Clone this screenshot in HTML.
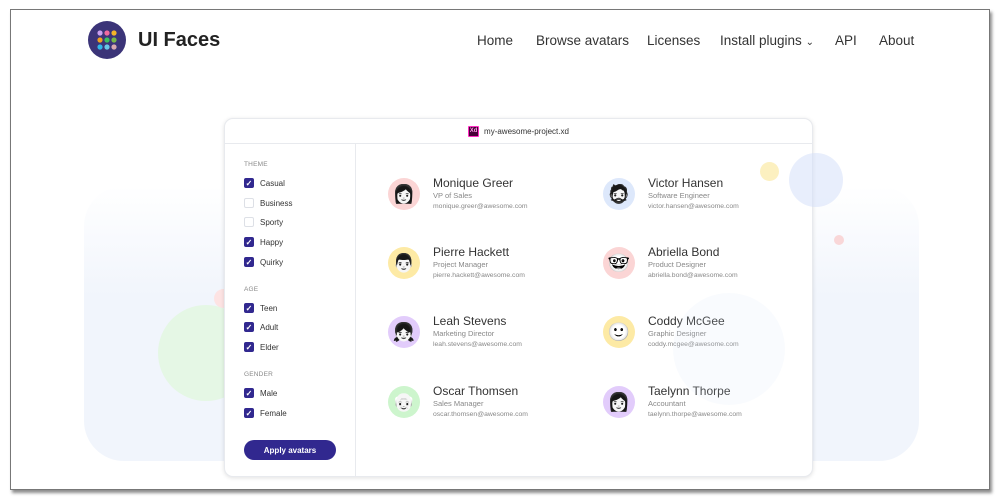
<!DOCTYPE html>
<html><head><meta charset="utf-8"><style>
*{margin:0;padding:0;box-sizing:border-box}
body{width:1000px;height:500px;background:#fff;position:relative;overflow:hidden;font-family:"Liberation Sans",sans-serif;color:#333}
.frame{position:absolute;left:10px;top:9px;width:980px;height:481px;border:1px solid #777;box-shadow:2px 3px 3px rgba(0,0,0,.45);background:#fff;overflow:hidden}
.abs{position:absolute}
.blob{left:73px;top:176px;width:835px;height:275px;border-radius:40px;background:linear-gradient(#fff,#f1f5fc 40%,#f1f5fc)}
.c{position:absolute;border-radius:50%}
.nav a{position:absolute;top:23px;font-size:13.5px;color:#333;text-decoration:none;white-space:nowrap}
.card{left:213px;top:108px;width:589px;height:359px;background:#fff;border-radius:9px;box-shadow:0 1px 4px rgba(0,0,0,.12);border:1px solid #e8eaee}
.hdr{height:25px;border-bottom:1px solid #e8eaee;font-size:8px;color:#333;display:flex;align-items:center;justify-content:center}
.xd{width:11px;height:11px;background:#470137;border:1px solid #ff2bc2;color:#ff9ae6;font-size:6px;font-weight:bold;display:inline-flex;align-items:center;justify-content:center;margin-right:5px;border-radius:1px}
.side{position:absolute;left:0;top:25px;width:131px;bottom:0;border-right:1px solid #e8eaee}
.lbl{position:absolute;left:19px;font-size:6.5px;color:#888;letter-spacing:.2px}
.cb{position:absolute;left:19px;font-size:8px;color:#333;display:flex;align-items:center}
.cb i{width:10px;height:10px;border-radius:2px;background:#31288f;margin-right:6px;display:inline-flex;align-items:center;justify-content:center;color:#fff;font-style:normal;font-size:8px;font-weight:bold}
.cb i.off{background:#fff;border:1px solid #dde0e6}
.btn{position:absolute;left:19px;top:296px;width:92px;height:20px;border-radius:10px;background:#31288f;color:#fff;font-size:8px;font-weight:bold;display:flex;align-items:center;justify-content:center}
.p{position:absolute}
.av{position:absolute;left:0;top:0;width:32px;height:32px;border-radius:50%;display:flex;align-items:center;justify-content:center;font-size:18px}
.av span{filter:grayscale(1) contrast(1.6)}
.p b{position:absolute;left:45px;top:-2px;font-weight:normal;font-size:12px;color:#333;white-space:nowrap}
.p s{position:absolute;left:45px;top:13px;text-decoration:none;font-size:7.5px;color:#888;white-space:nowrap}
.p u{position:absolute;left:45px;top:25px;text-decoration:none;font-size:6.8px;color:#888;white-space:nowrap}
</style></head><body>
<div class="frame">
<div class="abs blob"></div>
<div class="c" style="left:147px;top:295px;width:96px;height:96px;background:#e5f7e5"></div>
<div class="c" style="left:203px;top:279px;width:19px;height:19px;background:#fde3e3"></div>
<div class="c" style="left:236px;top:308px;width:52px;height:52px;background:#fdfbee"></div>
<div class="c" style="left:77px;top:11px;width:38px;height:38px;background:#3b3478"></div>
<svg class="abs" style="left:77px;top:11px" width="38" height="38">
<circle cx="12" cy="12" r="2.6" fill="#c9a0f0"/><circle cx="19" cy="12" r="2.6" fill="#f06aa0"/><circle cx="26" cy="12" r="2.6" fill="#f5b428"/>
<circle cx="12" cy="19" r="2.6" fill="#f0a020"/><circle cx="19" cy="19" r="2.6" fill="#3cc060"/><circle cx="26" cy="19" r="2.6" fill="#78b848"/>
<circle cx="12" cy="26" r="2.6" fill="#30b8e8"/><circle cx="19" cy="26" r="2.6" fill="#68c8e8"/><circle cx="26" cy="26" r="2.6" fill="#d8a8b0"/></svg>
<div class="abs" style="left:127px;top:19px;font-size:20px;font-weight:bold;color:#222">UI Faces</div>
<div class="nav">
<a style="left:466px">Home</a><a style="left:525px">Browse avatars</a><a style="left:636px">Licenses</a><a style="left:709px">Install plugins <span style="font-size:10px">&#8964;</span></a><a style="left:824px">API</a><a style="left:868px">About</a>
</div>
<div class="abs card">
<div class="hdr"><span class="xd">Xd</span>my-awesome-project.xd</div>
<div class="side">
<div class="lbl" style="top:17px">THEME</div>
<div class="cb" style="top:34px"><i>✓</i>Casual</div>
<div class="cb" style="top:54px"><i class="off"></i>Business</div>
<div class="cb" style="top:73px"><i class="off"></i>Sporty</div>
<div class="cb" style="top:93px"><i>✓</i>Happy</div>
<div class="cb" style="top:113px"><i>✓</i>Quirky</div>
<div class="lbl" style="top:142px">AGE</div>
<div class="cb" style="top:159px"><i>✓</i>Teen</div>
<div class="cb" style="top:178px"><i>✓</i>Adult</div>
<div class="cb" style="top:198px"><i>✓</i>Elder</div>
<div class="lbl" style="top:227px">GENDER</div>
<div class="cb" style="top:244px"><i>✓</i>Male</div>
<div class="cb" style="top:264px"><i>✓</i>Female</div>
<div class="btn">Apply avatars</div>
</div>
<div class="p" style="left:163px;top:59px"><div class="av" style="background:#fbd5d5"><span>👩</span></div><b>Monique Greer</b><s>VP of Sales</s><u>monique.greer@awesome.com</u></div>
<div class="p" style="left:163px;top:128px"><div class="av" style="background:#fdeaa5"><span>👨</span></div><b>Pierre Hackett</b><s>Project Manager</s><u>pierre.hackett@awesome.com</u></div>
<div class="p" style="left:163px;top:197px"><div class="av" style="background:#e2ccfb"><span>👧</span></div><b>Leah Stevens</b><s>Marketing Director</s><u>leah.stevens@awesome.com</u></div>
<div class="p" style="left:163px;top:267px"><div class="av" style="background:#cdf5cd"><span>👴</span></div><b>Oscar Thomsen</b><s>Sales Manager</s><u>oscar.thomsen@awesome.com</u></div>
<div class="p" style="left:378px;top:59px"><div class="av" style="background:#dde8fb"><span>🧔</span></div><b>Victor Hansen</b><s>Software Engineer</s><u>victor.hansen@awesome.com</u></div>
<div class="p" style="left:378px;top:128px"><div class="av" style="background:#fbd5d5"><span>🤓</span></div><b>Abriella Bond</b><s>Product Designer</s><u>abriella.bond@awesome.com</u></div>
<div class="p" style="left:378px;top:197px"><div class="av" style="background:#fdeaa5"><span>🙂</span></div><b>Coddy McGee</b><s>Graphic Designer</s><u>coddy.mcgee@awesome.com</u></div>
<div class="p" style="left:378px;top:267px"><div class="av" style="background:#e2ccfb"><span>👩</span></div><b>Taelynn Thorpe</b><s>Accountant</s><u>taelynn.thorpe@awesome.com</u></div>
</div>
<div class="c" style="left:778px;top:143px;width:54px;height:54px;background:rgba(210,222,250,.5)"></div>
<div class="c" style="left:749px;top:152px;width:19px;height:19px;background:rgba(250,230,150,.6)"></div>
<div class="c" style="left:823px;top:225px;width:10px;height:10px;background:rgba(250,200,200,.7)"></div>
<div class="c" style="left:662px;top:283px;width:112px;height:112px;background:rgba(215,228,250,.15)"></div>
</div>
</body></html>
